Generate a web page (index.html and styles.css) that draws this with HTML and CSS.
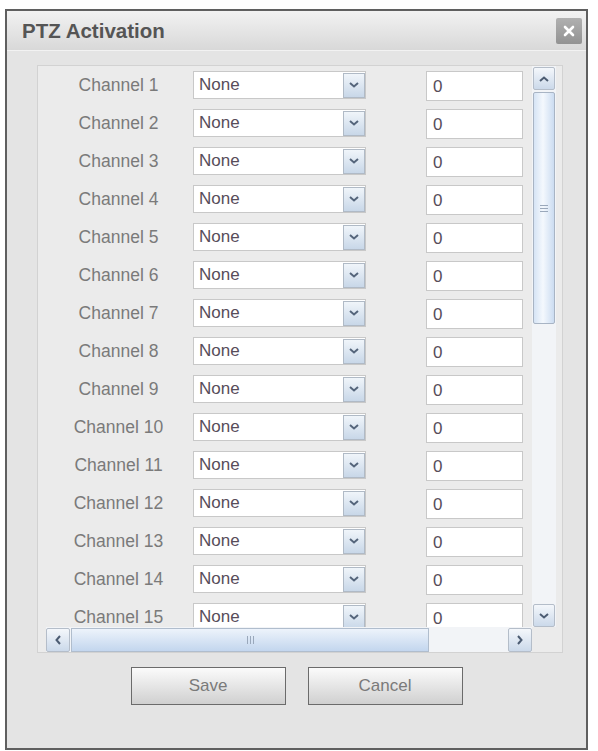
FILE: index.html
```html
<!DOCTYPE html>
<html lang="en">
<head>
  <meta charset="UTF-8" />
  <title>PTZ Activation</title>
  <link rel="stylesheet" href="styles.css">
</head>
<body>

  <div class="dialog">
    <div class="titlebar">
      <span class="title">PTZ Activation</span>
      <span class="close">
        <svg width="12" height="12" viewBox="0 0 12 12"><path d="M2 2 L10 10 M10 2 L2 10" stroke="#fff" stroke-width="2.6" stroke-linecap="round"/></svg>
      </span>
    </div>

    <div class="panel">
      <div class="scroller">
        <div class="rows" id="rows"></div>

        <div class="vbar">
          <span class="arrow">
            <svg width="10" height="6" viewBox="0 0 10 6"><path d="M1 5 L5 1.5 L9 5" fill="none" stroke="#4c5c72" stroke-width="2"/></svg>
          </span>
          <div class="vtrack">
            <div class="vthumb"><span class="grip-h"></span></div>
          </div>
          <span class="arrow">
            <svg width="10" height="6" viewBox="0 0 10 6"><path d="M1 1 L5 4.5 L9 1" fill="none" stroke="#4c5c72" stroke-width="2"/></svg>
          </span>
        </div>

        <div class="hbar">
          <span class="arrow">
            <svg width="6" height="10" viewBox="0 0 6 10"><path d="M5 1 L1.5 5 L5 9" fill="none" stroke="#4c5c72" stroke-width="2"/></svg>
          </span>
          <div class="htrack">
            <div class="hthumb"><span class="grip-v"></span></div>
          </div>
          <span class="arrow">
            <svg width="6" height="10" viewBox="0 0 6 10"><path d="M1 1 L4.5 5 L1 9" fill="none" stroke="#4c5c72" stroke-width="2"/></svg>
          </span>
        </div>

        <div class="corner"></div>
      </div>
    </div>

    <div class="actions">
      <button type="button">Save</button>
      <button type="button">Cancel</button>
    </div>
  </div>

  <script>
    const rows = document.getElementById('rows');
    for (let i = 1; i <= 15; i++) {
      rows.insertAdjacentHTML('beforeend',
        '<div class="row">' +
          '<span class="label">Channel ' + i + '</span>' +
          '<div class="select"><span class="value">None</span>' +
            '<span class="drop"><svg width="10" height="6" viewBox="0 0 10 6"><path d="M1 1 L5 4.5 L9 1" fill="none" stroke="#55657b" stroke-width="2"/></svg></span>' +
          '</div>' +
          '<div class="field">0</div>' +
        '</div>');
    }
  </script>

</body>
</html>
```

FILE: styles.css
```css
body, html {
  margin: 0;
  padding: 0;
  background: #ffffff;
  font-family: 'Liberation Sans', Arial, sans-serif;
}

.dialog {
  margin: 9px 0 0 5px;
  width: 579px;
  height: 737px;
  border: 2px solid #5f5f5f;
  background: #e4e4e4;
  display: flex;
  flex-direction: column;
}

.titlebar {
  height: 39px;
  display: flex;
  align-items: center;
  justify-content: space-between;
  padding: 0 4px 0 15px;
  background: linear-gradient(#f2f2f2, #d8d8d8);
  border-bottom: 1px solid #f2f2f2;
}

.title {
  font-size: 20.5px;
  font-weight: 700;
  color: #555;
}

.close {
  width: 26px;
  height: 26px;
  border-radius: 2px;
  background: linear-gradient(#b0b0b0, #929292);
  display: flex;
  align-items: center;
  justify-content: center;
}

.panel {
  margin: 14px 0 0 30px;
  width: 516px;
  height: 586px;
  padding: 0 0 0 8px;
  border: 1px solid #d2d2d2;
  background: #ebebeb;
}

.scroller {
  display: grid;
  grid-template-columns: 486px 24px;
  grid-template-rows: 561px 25px;
}

.rows {
  overflow: hidden;
  padding-top: 5px;
}

.row {
  height: 38px;
  display: flex;
  align-items: flex-start;
}

.label {
  width: 145px;
  line-height: 28px;
  text-align: center;
  font-size: 17.5px;
  color: #7a7a7a;
}

.select {
  margin-left: 2px;
  width: 171px;
  height: 26px;
  border: 1px solid #c8c8c8;
  background: #fff;
  display: flex;
  align-items: center;
  justify-content: space-between;
}

.value {
  padding-left: 5px;
  font-size: 17px;
  color: #574d5a;
}

.drop {
  width: 20px;
  height: 23px;
  border: 1px solid #b0bac6;
  background: linear-gradient(#f0f5fa, #c8d7e8);
  display: flex;
  align-items: center;
  justify-content: center;
}

.field {
  margin-left: 60px;
  width: 89px;
  height: 28px;
  padding-left: 6px;
  border: 1px solid #c8c8c8;
  background: #fff;
  line-height: 30px;
  font-size: 17px;
  color: #574d5a;
}

.vbar {
  display: flex;
  flex-direction: column;
  padding: 1px 1px 0 1px;
  background: #f2f4f7;
}

.arrow {
  flex: 0 0 auto;
  width: 22px;
  height: 23px;
  border: 1px solid #b4bdc9;
  border-radius: 2px;
  background: linear-gradient(#f4f7fb, #cbd9ea);
  display: flex;
  align-items: center;
  justify-content: center;
  box-sizing: border-box;
}

.vtrack {
  flex: 1;
  padding-top: 2px;
}

.vthumb {
  height: 232px;
  border: 1px solid #a8b4c4;
  border-radius: 2px;
  background: linear-gradient(90deg, #d6e4f5, #f4f8fd 45%, #cbdcf1);
  display: flex;
  align-items: center;
  justify-content: center;
  box-sizing: border-box;
}

.grip-h {
  width: 8px;
  height: 7px;
  background: repeating-linear-gradient(#9aa8bb 0 1px, transparent 1px 3px);
}

.hbar {
  display: flex;
  align-items: stretch;
  padding-top: 1px;
  background: #f2f4f7;
}

.hbar .arrow {
  width: 24px;
  height: 24px;
}

.htrack {
  flex: 1;
  padding-left: 1px;
}

.hthumb {
  width: 358px;
  height: 24px;
  border: 1px solid #b0bdcd;
  background: linear-gradient(#edf3fb, #c3d6ee);
  display: flex;
  align-items: center;
  justify-content: center;
  box-sizing: border-box;
}

.grip-v {
  width: 7px;
  height: 8px;
  background: repeating-linear-gradient(90deg, #9aa8bb 0 1px, transparent 1px 3px);
}

.corner {
  background: #ebebeb;
}

.actions {
  margin-top: 14px;
  display: flex;
  justify-content: center;
  gap: 22px;
}

.actions button {
  width: 155px;
  height: 38px;
  border: 1px solid #6b6b6b;
  background: linear-gradient(#fbfbfb, #d0d0d0);
  font-family: 'Liberation Sans', Arial, sans-serif;
  font-size: 17px;
  color: #7a7a7a;
  padding: 0;
}
```
